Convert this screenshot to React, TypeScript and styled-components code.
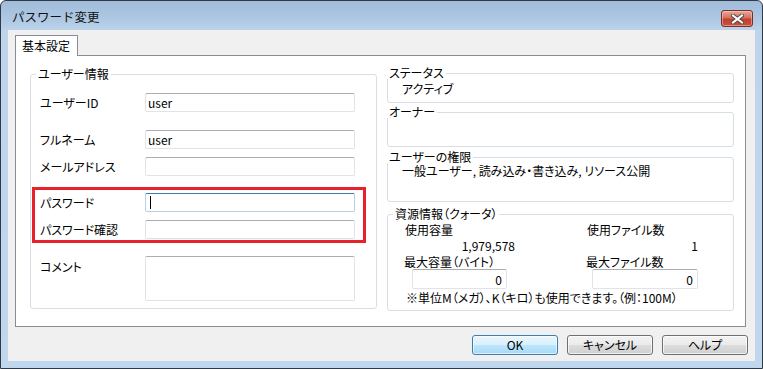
import React from 'react';
import styled, { createGlobalStyle } from 'styled-components';

const GlobalStyle = createGlobalStyle`
  html, body {
    margin: 0;
    padding: 0;
    width: 763px;
    height: 369px;
    overflow: hidden;
    background: #ffffff;
  }
  body {
    font-family: "Noto Sans CJK JP", "Liberation Sans", sans-serif;
    font-size: 12px;
    font-feature-settings: "palt" 1;
    color: #000;
  }
  * { box-sizing: border-box; }
`;

type boxProps = {
  $h?: number;
  $mt?: number;
  $pt?: number;
};

type legendProps = {
  $left?: number;
};

type fieldProps = {
  $w?: number;
  $h?: number;
  $ml?: number;
  $focus?: boolean;
  $right?: boolean;
};

const Window = styled.div`
  width: 763px;
  height: 369px;
  border: 1px solid #2f3a48;
  border-radius: 6px 6px 0 0;
  background: linear-gradient(180deg, #a0bcda 0px, #aec8e3 18px, #bdd4eb 30px, #c0d7ee 100%);
  display: flex;
  flex-direction: column;
  padding: 0 7px 7px 7px;
`;

const TitleBar = styled.div`
  height: 29px;
  display: flex;
  align-items: flex-start;
  justify-content: space-between;
  padding-left: 4px;
`;

const TitleText = styled.div`
  margin-top: 8px;
  line-height: 16px;
  font-size: 12.5px;
  font-feature-settings: normal;
  color: #111;
`;

const CloseButton = styled.div`
  width: 32px;
  height: 17px;
  margin-top: 9px;
  margin-right: 2px;
  border: 1px solid #7b2d26;
  border-radius: 3px;
  background: linear-gradient(180deg, #e8a99c 0%, #d4715f 45%, #c4402d 55%, #c8513c 100%);
  display: flex;
  align-items: center;
  justify-content: center;
  box-shadow: inset 0 0 0 1px rgba(255, 220, 210, 0.45);
`;

const Client = styled.div`
  flex: 1;
  background: #f0f0f0;
  display: flex;
  flex-direction: column;
  padding: 5px 0 0 7px;
`;

const TabStrip = styled.div`
  display: flex;
  position: relative;
  z-index: 1;
  margin-bottom: -1px;
`;

const Tab = styled.div`
  width: 63px;
  height: 21px;
  border: 1px solid #898c95;
  border-bottom: none;
  background: #ffffff;
  padding-left: 6px;
  line-height: 20px;
`;

const Panel = styled.div`
  width: 731px;
  height: 272px;
  border: 1px solid #898c95;
  background: #ffffff;
  display: flex;
  gap: 10px;
  padding: 18px 0 0 14px;
`;

const RightColumn = styled.div`
  display: flex;
  flex-direction: column;
  margin-top: -1px;
`;

const GroupBox = styled.div<boxProps>`
  position: relative;
  width: 347px;
  height: ${(p) => p.$h || 30}px;
  margin-top: ${(p) => p.$mt || 0}px;
  padding-top: ${(p) => p.$pt || 0}px;
  border: 1px solid #d5dfe5;
  border-radius: 3px;
  display: flex;
  flex-direction: column;
`;

const Legend = styled.div<legendProps>`
  position: absolute;
  top: -7px;
  left: ${(p) => p.$left ?? 5}px;
  padding: 0 2px;
  background: #ffffff;
  line-height: 12px;
`;

const Row = styled.div<boxProps>`
  display: flex;
  align-items: ${(p) => (p.$h ? 'flex-start' : 'center')};
  margin-top: ${(p) => p.$mt || 0}px;
  padding-left: 9px;
`;

const Label = styled.div<boxProps>`
  width: 105px;
  line-height: 14px;
  padding-top: ${(p) => p.$pt || 0}px;
`;

const TextBox = styled.div<fieldProps>`
  width: ${(p) => p.$w || 210}px;
  height: ${(p) => p.$h || 19}px;
  margin-left: ${(p) => p.$ml || 0}px;
  border: 1px solid ${(p) => (p.$focus ? '#b5cfe7' : '#e2e3ea')};
  border-top-color: ${(p) => (p.$focus ? '#3d7bad' : '#abadb3')};
  border-radius: 2px;
  background: #ffffff;
  padding: 0 4px 0 2px;
  line-height: 17px;
  display: flex;
  align-items: center;
  justify-content: ${(p) => (p.$right ? 'flex-end' : 'flex-start')};
`;

const Caret = styled.span`
  display: block;
  width: 1px;
  height: 13px;
  margin-left: 2px;
  background: #000000;
`;

const Highlight = styled.div<boxProps>`
  width: 334px;
  margin-left: 1px;
  margin-top: ${(p) => p.$mt || 0}px;
  border: 3px solid #e8212b;
  padding: 3px 0 1px 0;
  display: flex;
  flex-direction: column;

  ${Row} {
    padding-left: 5px;
  }
`;

const Info = styled.div<boxProps>`
  padding-left: 14px;
  margin-top: ${(p) => p.$mt || 0}px;
  line-height: 14px;
`;

const QuotaGrid = styled.div`
  display: grid;
  grid-template-columns: 182px 158px;
  padding-left: 17px;
  margin-top: 8px;
  line-height: 14px;
`;

const QuotaText = styled.div<fieldProps>`
  margin-top: ${(p) => (p.$h ? p.$h : 0)}px;
  margin-left: ${(p) => p.$ml || 0}px;
  width: ${(p) => (p.$w ? `${p.$w}px` : 'auto')};
  text-align: ${(p) => (p.$right ? 'right' : 'left')};
`;

const Note = styled.div`
  grid-column: 1 / -1;
  margin-top: 2px;
  margin-left: 1px;
`;

const ButtonRow = styled.div`
  display: flex;
  justify-content: flex-end;
  gap: 9px;
  margin-top: 8px;
  padding-right: 7px;
`;

const Button = styled.div<{ $primary?: boolean }>`
  width: 86px;
  height: 20px;
  border: 1px solid ${(p) => (p.$primary ? '#3c7fb1' : '#707070')};
  border-radius: 3px;
  background: ${(p) =>
    p.$primary
      ? 'linear-gradient(180deg, #eaf6fd 0%, #d9f0fc 50%, #bee6fd 50%, #a7d9f5 100%)'
      : 'linear-gradient(180deg, #f2f2f2 0%, #ebebeb 50%, #dddddd 50%, #cfcfcf 100%)'};
  box-shadow: inset 0 0 0 1px ${(p) => (p.$primary ? 'rgba(255,255,255,0.6)' : 'rgba(255,255,255,0.7)')};
  display: flex;
  align-items: center;
  justify-content: center;
  line-height: 14px;
`;

const CloseGlyph = () => (
  <svg width="13" height="10" viewBox="0 0 13 10">
    <path d="M2 1.5 L11 8.5 M11 1.5 L2 8.5" stroke="#4a4a4a" strokeWidth="4" strokeLinecap="square" />
    <path d="M2 1.5 L11 8.5 M11 1.5 L2 8.5" stroke="#ffffff" strokeWidth="2" strokeLinecap="square" />
  </svg>
);

export default function App() {
  return (
    <>
      <GlobalStyle />
      <Window>
        <TitleBar>
          <TitleText>パスワード変更</TitleText>
          <CloseButton>
            <CloseGlyph />
          </CloseButton>
        </TitleBar>
        <Client>
          <TabStrip>
            <Tab>基本設定</Tab>
          </TabStrip>
          <Panel>
            <GroupBox $h={235}>
              <Legend $left={5}>ユーザー情報</Legend>
              <Row $mt={18}>
                <Label>ユーザーID</Label>
                <TextBox>user</TextBox>
              </Row>
              <Row $mt={18}>
                <Label>フルネーム</Label>
                <TextBox>user</TextBox>
              </Row>
              <Row $mt={8}>
                <Label>メールアドレス</Label>
                <TextBox />
              </Row>
              <Highlight $mt={11}>
                <Row>
                  <Label>パスワード</Label>
                  <TextBox $focus>
                    <Caret />
                  </TextBox>
                </Row>
                <Row $mt={8}>
                  <Label>パスワード確認</Label>
                  <TextBox />
                </Row>
              </Highlight>
              <Row $mt={13} $h={45}>
                <Label $pt={4}>コメント</Label>
                <TextBox $h={45} />
              </Row>
            </GroupBox>

            <RightColumn>
              <GroupBox $h={30}>
                <Legend $left={-1}>ステータス</Legend>
                <Info $mt={8}>アクティブ</Info>
              </GroupBox>
              <GroupBox $h={35} $mt={9}>
                <Legend $left={-1}>オーナー</Legend>
              </GroupBox>
              <GroupBox $h={45} $mt={10}>
                <Legend $left={-1}>ユーザーの権限</Legend>
                <Info $mt={6}>一般ユーザー, 読み込み・書き込み, リソース公開</Info>
              </GroupBox>
              <GroupBox $h={97} $mt={12}>
                <Legend $left={5}>資源情報（クォータ）</Legend>
                <QuotaGrid>
                  <QuotaText>使用容量</QuotaText>
                  <QuotaText>使用ファイル数</QuotaText>
                  <QuotaText $h={2} $w={110} $right>1,979,578</QuotaText>
                  <QuotaText $h={2} $w={111} $right>1</QuotaText>
                  <QuotaText $h={2} $ml={-1}>最大容量（バイト）</QuotaText>
                  <QuotaText $h={2} $ml={-1}>最大ファイル数</QuotaText>
                  <TextBox $w={95} $h={20} $ml={7} $right>0</TextBox>
                  <TextBox $w={106} $h={20} $ml={5} $right>0</TextBox>
                  <Note>※単位M（メガ）、K（キロ）も使用できます。（例：100M）</Note>
                </QuotaGrid>
              </GroupBox>
            </RightColumn>
          </Panel>
          <ButtonRow>
            <Button $primary>OK</Button>
            <Button>キャンセル</Button>
            <Button>ヘルプ</Button>
          </ButtonRow>
        </Client>
      </Window>
    </>
  );
}
